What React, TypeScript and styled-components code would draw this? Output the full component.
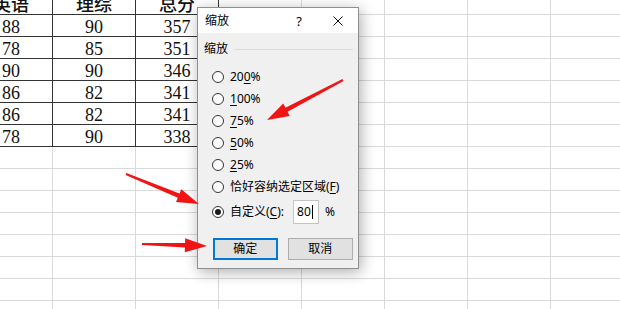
import React from 'react';
import styled, { createGlobalStyle } from 'styled-components';

const GlobalStyle = createGlobalStyle`
  html, body {
    margin: 0;
    padding: 0;
    background: #ffffff;
    overflow: hidden;
  }
`;

const UI_FONT = `"Noto Sans", "Noto Sans CJK SC", sans-serif`;

const Page = styled.div`
  position: relative;
  width: 620px;
  height: 309px;
  overflow: hidden;
  background: #ffffff;
`;

const Sheet = styled.div`
  display: grid;
  grid-template-columns: repeat(8, 83px);
  grid-auto-rows: 22px;
  margin-left: -30px;
  margin-top: -7px;
`;

const Cell = styled.div<{ $table?: boolean; $head?: boolean }>`
  box-sizing: border-box;
  border-right: 1px solid ${(p) => (p.$table ? '#333333' : '#d9d9d9')};
  border-bottom: 1px solid ${(p) => (p.$table ? '#333333' : '#d9d9d9')};
  display: flex;
  justify-content: center;
  align-items: flex-start;
  padding-top: ${(p) => (p.$head ? '0' : '2px')};
  line-height: 20px;
  font-family: ${(p) =>
    p.$head
      ? `"Noto Sans CJK SC", sans-serif`
      : `"Liberation Serif", "Times New Roman", serif`};
  font-size: 18px;
  font-weight: ${(p) => (p.$head ? 500 : 400)};
  color: #111111;
  white-space: nowrap;
`;

const Dialog = styled.div`
  position: absolute;
  left: 197px;
  top: 7px;
  width: 162px;
  height: 262px;
  box-sizing: border-box;
  border: 1px solid #8f8f8f;
  background: #f0f0f0;
  box-shadow: 2px 3px 14px rgba(0, 0, 0, 0.32);
  display: flex;
  flex-direction: column;
  font-family: ${UI_FONT};
  font-size: 12px;
  color: #000000;
`;

const TitleBar = styled.div`
  height: 25px;
  background: #ffffff;
  display: flex;
  align-items: center;
  padding-left: 7px;
`;

const Title = styled.span`
  flex: 1;
  line-height: 16px;
`;

const HelpButton = styled.span`
  width: 12px;
  text-align: center;
  margin-right: 28px;
  font-size: 13px;
`;

const CloseButton = styled.span`
  display: flex;
  margin-right: 15px;
`;

const Body = styled.div`
  flex: 1;
  display: flex;
  flex-direction: column;
  padding: 8px 5px 0 6px;
`;

const GroupHeader = styled.div`
  display: flex;
  align-items: center;
  gap: 6px;
  height: 16px;
  line-height: 16px;
`;

const GroupLine = styled.span`
  flex: 1;
  height: 1px;
  background: #dcdcdc;
`;

const RadioList = styled.div`
  display: flex;
  flex-direction: column;
  margin-top: 9px;
  padding-left: 8px;
`;

const RadioRow = styled.div`
  display: flex;
  align-items: center;
  gap: 6px;
  height: 22px;
`;

const CustomRow = styled(RadioRow)`
  height: 24px;
  margin-top: 2px;
`;

const Radio = styled.span<{ $checked?: boolean }>`
  position: relative;
  box-sizing: border-box;
  width: 12px;
  height: 12px;
  border-radius: 50%;
  border: 1px solid #333333;
  background: #ffffff;

  &::after {
    content: '';
    display: ${(p) => (p.$checked ? 'block' : 'none')};
    position: absolute;
    left: 2px;
    top: 2px;
    width: 6px;
    height: 6px;
    border-radius: 50%;
    background: #1a1a1a;
  }
`;

const Label = styled.span`
  line-height: 16px;
  white-space: nowrap;
`;

const Key = styled.span`
  text-decoration: underline;
  text-underline-offset: 2px;
`;

const Input = styled.div`
  box-sizing: border-box;
  width: 26px;
  height: 24px;
  margin-left: 3px;
  border: 1px solid #c4c4c4;
  background: #ffffff;
  display: flex;
  align-items: center;
  padding-left: 3px;
  line-height: 16px;
`;

const Caret = styled.span`
  width: 1px;
  height: 14px;
  background: #000000;
  margin-left: 1px;
`;

const ButtonRow = styled.div`
  display: flex;
  gap: 10px;
  margin-top: 14px;
  padding-left: 9px;
`;

const Button = styled.div<{ $primary?: boolean }>`
  box-sizing: border-box;
  width: ${(p) => (p.$primary ? '65px' : '66px')};
  height: 22px;
  background: #e1e1e1;
  border: ${(p) => (p.$primary ? '2px solid #0078d7' : '1px solid #adadad')};
  display: flex;
  align-items: center;
  justify-content: center;
  line-height: 16px;
`;

const Overlay = styled.svg`
  position: absolute;
  left: 0;
  top: 0;
  pointer-events: none;
`;

const rows = [
  ['88', '90', '357'],
  ['78', '85', '351'],
  ['90', '90', '346'],
  ['86', '82', '341'],
  ['86', '82', '341'],
  ['78', '90', '338'],
];

// tail x/y, tip x/y -> polygon for a tapered red arrow
const arrowPoints = (
  tx: number,
  ty: number,
  hx: number,
  hy: number,
  headLen = 22,
  headW = 14,
  tailW = 2,
  neckW = 4.5
) => {
  const dx = hx - tx;
  const dy = hy - ty;
  const len = Math.hypot(dx, dy);
  const ux = dx / len;
  const uy = dy / len;
  const nx = -uy;
  const ny = ux;
  const bx = hx - ux * headLen;
  const by = hy - uy * headLen;
  const pts = [
    [tx + (nx * tailW) / 2, ty + (ny * tailW) / 2],
    [bx + (nx * neckW) / 2, by + (ny * neckW) / 2],
    [bx + (nx * headW) / 2, by + (ny * headW) / 2],
    [hx, hy],
    [bx - (nx * headW) / 2, by - (ny * headW) / 2],
    [bx - (nx * neckW) / 2, by - (ny * neckW) / 2],
    [tx - (nx * tailW) / 2, ty - (ny * tailW) / 2],
  ];
  return pts.map(([x, y]) => `${x.toFixed(1)},${y.toFixed(1)}`).join(' ');
};

const arrows = [
  [343, 80, 267, 120],
  [126, 174, 199, 204],
  [142, 244, 207, 246],
];

const SheetGrid = () => {
  const cells: React.ReactNode[] = [];
  const head = ['英语', '理综', '总分'];
  for (let r = 0; r < 15; r++) {
    for (let c = 0; c < 8; c++) {
      const inTable = r <= 6 && c <= 2;
      let text = '';
      if (inTable) text = r === 0 ? head[c] : rows[r - 1][c];
      cells.push(
        <Cell key={`${r}-${c}`} $table={inTable} $head={r === 0}>
          {text}
        </Cell>
      );
    }
  }
  return <Sheet>{cells}</Sheet>;
};

const options: React.ReactNode[] = [
  <>
    20<Key>0</Key>%
  </>,
  <>
    <Key>1</Key>00%
  </>,
  <>
    <Key>7</Key>5%
  </>,
  <>
    <Key>5</Key>0%
  </>,
  <>
    <Key>2</Key>5%
  </>,
  <>
    恰好容纳选定区域(<Key>F</Key>)
  </>,
];

export default function App() {
  return (
    <Page>
      <GlobalStyle />
      <SheetGrid />
      <Dialog>
        <TitleBar>
          <Title>缩放</Title>
          <HelpButton>?</HelpButton>
          <CloseButton>
            <svg width="10" height="10" viewBox="0 0 10 10">
              <path d="M0.5 0.5 L9.5 9.5 M9.5 0.5 L0.5 9.5" stroke="#111" strokeWidth="1" />
            </svg>
          </CloseButton>
        </TitleBar>
        <Body>
          <GroupHeader>
            <span>缩放</span>
            <GroupLine />
          </GroupHeader>
          <RadioList>
            {options.map((o, i) => (
              <RadioRow key={i}>
                <Radio />
                <Label>{o}</Label>
              </RadioRow>
            ))}
            <CustomRow>
              <Radio $checked />
              <Label>
                自定义(<Key>C</Key>):
              </Label>
              <Input>
                80
                <Caret />
              </Input>
              <Label>%</Label>
            </CustomRow>
          </RadioList>
          <ButtonRow>
            <Button $primary>确定</Button>
            <Button>取消</Button>
          </ButtonRow>
        </Body>
      </Dialog>
      <Overlay width="620" height="309" viewBox="0 0 620 309">
        {arrows.map(([a, b, c, d], i) => (
          <polygon key={i} points={arrowPoints(a, b, c, d)} fill="#f01414" />
        ))}
      </Overlay>
    </Page>
  );
}
